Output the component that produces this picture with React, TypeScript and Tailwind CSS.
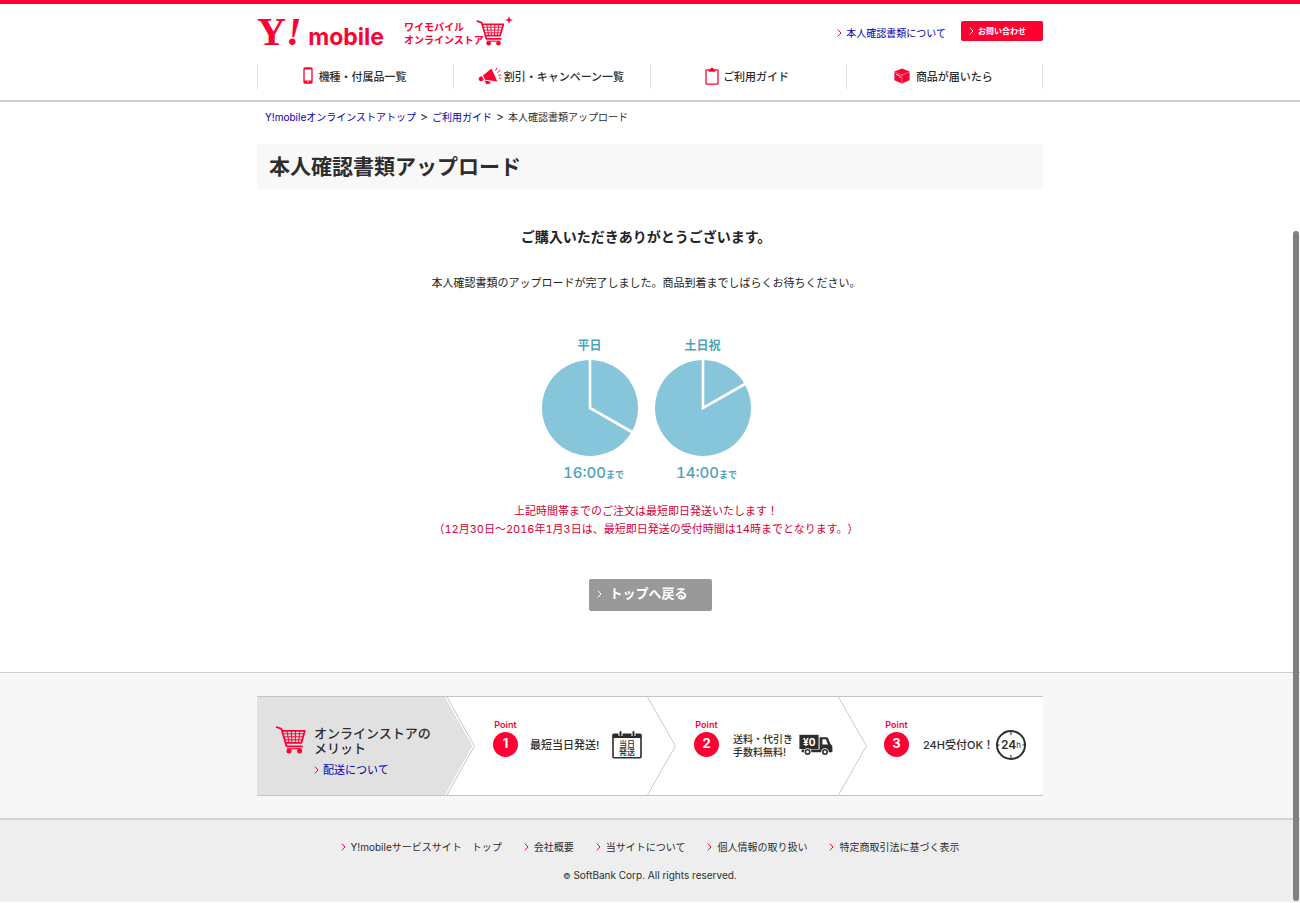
import React from "react";

type IconProps = { className?: string };

function Chevron({ className = "" }: IconProps) {
  return (
    <svg viewBox="0 0 5 8" className={`h-2 w-[5px] shrink-0 ${className}`} fill="none" stroke="currentColor" strokeWidth="1" aria-hidden="true">
      <path d="M0.8 0.6 4 4 0.8 7.4" />
    </svg>
  );
}

function Cart({ className = "" }: IconProps) {
  return (
    <svg viewBox="0 0 30 28" className={className} fill="none" stroke="#ff0033" aria-hidden="true">
      <path d="M0.8 1.2 5.4 2.8 10.6 20.4H26" strokeWidth="1.8" strokeLinecap="round" strokeLinejoin="round" />
      <path d="M6 4.8H28.8L25.4 16.8H9.6" strokeWidth="1.8" strokeLinejoin="round" />
      <path d="M7 7.8H27.8M8 10.8H27M9 13.8H26M11 4.8 13 16.8M15.2 4.8 16 16.8M19.6 4.8 19.2 16.8M24 4.8 22.4 16.8" strokeWidth="1" />
      <circle cx="13" cy="25" r="2.5" fill="#ff0033" stroke="none" />
      <circle cx="23.6" cy="25" r="2.5" fill="#ff0033" stroke="none" />
      <path d="M11 22.8H25.5" strokeWidth="1.2" />
    </svg>
  );
}

function Sparkle({ className = "" }: IconProps) {
  return (
    <svg viewBox="0 0 8 8" className={className} fill="#ff0033" aria-hidden="true">
      <path d="M4 0 5 3 8 4 5 5 4 8 3 5 0 4 3 3Z" />
    </svg>
  );
}

function PhoneIcon() {
  return (
    <svg viewBox="0 0 10 17" className="h-[17px] w-2.5" aria-hidden="true">
      <rect x="1" y="0.8" width="8" height="15.4" rx="1" fill="#fff" stroke="#ff0033" strokeWidth="1.3" />
      <path d="M1 1H9V2.4H1ZM1 13.6H9V16H1Z" fill="#ff0033" />
      <circle cx="5" cy="14.8" r="0.7" fill="#fff" />
    </svg>
  );
}

function MegaphoneIcon() {
  return (
    <svg viewBox="0 0 24 18" className="h-[18px] w-6" aria-hidden="true">
      <path d="M13.4 1.6 19.4 14.4 7 12.8 5 8.4Z" fill="#ff0033" />
      <path d="M3.9 8.9 5.8 13 3.2 14.2Q1.4 14.6 0.8 12.8 0.2 11 1.6 10Z" fill="#ff0033" />
      <path d="M6.6 13.6 12 14.4 12.4 16.6 8.4 17.2Z" fill="#ff0033" />
      <path d="M17.6 3.6 18.8 0.8M19.4 5.6 22.6 3M20.4 8.2 23.2 8.2M21 10.6 23.2 11.8" stroke="#ff0033" strokeWidth="0.9" />
    </svg>
  );
}

function ClipboardIcon() {
  return (
    <svg viewBox="0 0 14 18" className="h-[18px] w-3.5" aria-hidden="true">
      <rect x="1" y="2.8" width="12" height="14.4" rx="0.8" fill="#fff" stroke="#ff0033" strokeWidth="1.3" />
      <path d="M3.6 4.8V2.4H5.2Q5.6 0.4 7 0.4T8.8 2.4H10.4V4.8Z" fill="#ff0033" />
    </svg>
  );
}

function BoxIcon() {
  return (
    <svg viewBox="0 0 16 16" className="size-4" aria-hidden="true">
      <path d="M8 0.6 15.6 3.6V12.2L8 15.6 0.4 12.2V3.6Z" fill="#ff0033" />
      <path d="M0.6 4 8 7 15.4 4M8 7V15.4" fill="none" stroke="#fff" strokeWidth="0.4" />
      <path d="M2.2 6.4 6 8V10" fill="none" stroke="#fff" strokeWidth="0.9" />
    </svg>
  );
}

function CalendarIcon() {
  return (
    <span className="relative flex h-7 w-[30px] flex-col items-center justify-end pb-[3px] text-[8px] leading-[8px] font-medium">
      <svg viewBox="0 0 30 28" className="absolute inset-0 h-7 w-[30px]" aria-hidden="true">
        <rect x="1" y="3.4" width="28" height="23.4" rx="1" fill="#fff" stroke="#2d2d2d" strokeWidth="1.6" />
        <path d="M0.8 3.2H29.2V7H0.8Z" fill="#2d2d2d" />
        <path d="M8.5 0.6V5M21.5 0.6V5" stroke="#fff" strokeWidth="4" />
        <path d="M8.5 1V4.6M21.5 1V4.6" stroke="#2d2d2d" strokeWidth="2" strokeLinecap="round" />
      </svg>
      <span className="relative">当日</span>
      <span className="relative">発送</span>
    </span>
  );
}

function TruckIcon() {
  return (
    <span className="relative block h-[22px] w-[34px]">
      <svg viewBox="0 0 34 22" className="h-[22px] w-[34px]" aria-hidden="true">
        <path d="M0.4 0.8H19.6V15H0.4Z" fill="#2d2d2d" />
        <path d="M20.6 3.2H27.4Q28.6 3.2 29.2 4.6L31.4 10Q33.2 11 33.4 13V18.2H2.6V15.6H20.6Z" fill="#2d2d2d" />
        <path d="M23.4 5.2H26.8L29 10.4H23.4Z" fill="#fff" />
        <circle cx="8.6" cy="18" r="3.8" fill="#fff" />
        <circle cx="26" cy="18" r="3.8" fill="#fff" />
        <circle cx="8.6" cy="18" r="2.2" fill="#fff" stroke="#2d2d2d" strokeWidth="1.6" />
        <circle cx="26" cy="18" r="2.2" fill="#fff" stroke="#2d2d2d" strokeWidth="1.6" />
      </svg>
      <span className="absolute top-0.5 left-1 text-[10px] leading-[12px] font-bold text-white">¥0</span>
    </span>
  );
}

function ClockIcon() {
  return (
    <span className="relative flex size-[30px] items-center justify-center rounded-full border-2 border-[#2d2d2d] leading-none">
      <svg viewBox="0 0 26 26" className="absolute inset-0 size-[26px]" stroke="#2d2d2d" aria-hidden="true">
        <path d="M13 0V3M13 23V26M0 13H1.5M24.5 13H26" />
      </svg>
      <span className="text-[12px] font-semibold">24</span>
      <span className="text-[8px]">h</span>
    </span>
  );
}

const navItems = [
  { label: "機種・付属品一覧", icon: <PhoneIcon />, gap: "gap-1.5" },
  { label: "割引・キャンペーン一覧", icon: <MegaphoneIcon />, gap: "gap-0.5" },
  { label: "ご利用ガイド", icon: <ClipboardIcon />, gap: "gap-1" },
  { label: "商品が届いたら", icon: <BoxIcon />, gap: "gap-1.5" },
];

function Header() {
  return (
    <header className="border-t-4 border-b-2 border-t-[#ff0033] border-b-[#cfcfcf] bg-white pb-[11px]">
      <div className="mx-auto w-full max-w-[786px]">
        <div className="flex h-[60px] items-start justify-between">
          <a href="#top" className="flex items-start pt-3 text-[#ff0033]">
            <span className="-mt-1 flex w-[127px] items-baseline justify-between leading-[40px] font-bold">
              <span className="font-['Liberation_Serif',serif] text-[40px]">
                Y<i>!</i>
              </span>
              <span className="text-[23px]">mobile</span>
            </span>
            <span className="ml-5 pt-[5px] text-[10px] leading-[13px] font-bold">
              ワイモバイル
              <br />
              オンラインストア
            </span>
            <Cart className="-ml-2 mt-1 h-[26px] w-[29px]" />
            <Sparkle className="size-2" />
          </a>
          <div className="flex items-start gap-[15px] pt-[17px]">
            <a href="#documents" className="flex items-center gap-1 pt-1 text-[10px] leading-4 text-[#0000b4]">
              <Chevron className="text-[#ff0033]" />
              本人確認書類について
            </a>
            <button type="button" className="flex h-5 w-[82px] items-center gap-1 rounded-xs bg-[#ff0033] pl-2 text-[8px] font-bold text-white">
              <Chevron />
              お問い合わせ
            </button>
          </div>
        </div>
        <nav>
          <ul className="grid grid-cols-4 border-l border-[#e0e0e0]">
            {navItems.map((item) => (
              <li key={item.label} className="border-r border-[#e0e0e0]">
                <a href="#nav" className={`flex h-[25px] items-center justify-center pr-0.5 text-[11px] font-medium text-[#2d2d2d] ${item.gap}`}>
                  <span className="pb-0.5">{item.icon}</span>
                  <span className="pt-0.5">{item.label}</span>
                </a>
              </li>
            ))}
          </ul>
        </nav>
      </div>
    </header>
  );
}

function Pie({ label, hour, angleX, angleY }: { label: string; hour: string; angleX: number; angleY: number }) {
  return (
    <figure className="flex w-24 flex-col items-center text-[#4ca3b8]">
      <figcaption className="text-[12px] leading-[18px] font-bold">{label}</figcaption>
      <svg viewBox="0 0 96 96" className="mt-[5px] size-24" aria-hidden="true">
        <circle cx="48" cy="48" r="48" fill="#86c5da" />
        <path d={`M48 0V48L${angleX} ${angleY}`} fill="none" stroke="#fff" strokeWidth="2.6" />
      </svg>
      <p className="mt-[7px] pl-2 text-[15px] leading-5 font-medium tabular-nums">
        {hour}
        <span className="text-[9px] font-bold">まで</span>
      </p>
    </figure>
  );
}

function Main() {
  return (
    <main className="mx-auto w-full max-w-[786px] flex-1 pb-[61px]">
      <nav className="flex items-center gap-1 pt-1.5 pl-2 text-[10px] leading-[18px] text-[#2d2d2d]">
        <a href="#top" className="text-[#0000b4]">Y!mobileオンラインストアトップ</a>
        <span className="text-[12px]">&gt;</span>
        <a href="#guide" className="text-[#0000b4]">ご利用ガイド</a>
        <span className="text-[12px]">&gt;</span>
        <span>本人確認書類アップロード</span>
      </nav>
      <h1 className="mt-[18px] bg-[#f8f8f8] px-3 text-[21px] leading-[45px] font-bold text-[#2d2d2d]">本人確認書類アップロード</h1>
      <div className="pr-2 text-center">
        <h2 className="mt-9 text-[14px] leading-6 font-bold">ご購入いただきありがとうございます。</h2>
        <p className="mt-6 text-[11px] leading-5">本人確認書類のアップロードが完了しました。商品到着までしばらくお待ちください。</p>
        <div className="mt-11 flex justify-center gap-[17px]">
          <Pie label="平日" hour="16:00" angleX={90} angleY={72} />
          <Pie label="土日祝" hour="14:00" angleX={90} angleY={24} />
        </div>
        <p className="mt-[17px] text-[11px] leading-[18px] text-[#d7003a] tabular-nums [text-spacing-trim:space-all]">
          上記時間帯までのご注文は最短即日発送いたします！
          <br />
          （12月30日〜2016年1月3日は、最短即日発送の受付時間は14時までとなります。）
        </p>
      </div>
      <button type="button" className="mx-auto mt-[41px] flex h-8 w-[123px] items-center gap-2 rounded-xs bg-[#999] pb-0.5 pl-2 text-[13px] font-bold text-white">
        <Chevron />
        トップへ戻る
      </button>
    </main>
  );
}

function Divider() {
  return (
    <svg viewBox="0 0 29 98" className="h-[98px] w-[29px] shrink-0" fill="none" stroke="#ccc" aria-hidden="true">
      <path d="M0.5 0 28.4 49 0.5 98" />
    </svg>
  );
}

function Point({ no }: { no: number }) {
  return (
    <div className="flex flex-col items-center text-[#ff0033]">
      <span className="text-[9px] leading-[9px] font-semibold">Point</span>
      <span className="mt-[3px] flex size-[25px] items-center justify-center rounded-full bg-[#ff0033] text-[13px] font-bold text-white">{no}</span>
    </div>
  );
}

function Merits() {
  return (
    <section className="border-t border-[#ccc] bg-[#f7f7f7] pt-[23px] pb-[22px]">
      <div className="mx-auto flex w-full max-w-[786px] border-y border-[#c4c4c4] bg-white text-[#2d2d2d]">
        <div className="flex w-[188px] items-start bg-[#e1e1e1] pt-[29px] pl-[19px]">
          <Cart className="h-7 w-[30px] shrink-0" />
          <div className="ml-2 whitespace-nowrap">
            <h3 className="text-[13px] leading-[15px] font-medium">
              オンラインストアの
              <br />
              メリット
            </h3>
            <a href="#delivery" className="mt-1.5 flex items-center gap-1 text-[11px] leading-4 text-[#0000b4]">
              <Chevron className="text-[#ff0033]" />
              配送について
            </a>
          </div>
        </div>
        <svg viewBox="0 0 30 98" className="h-[98px] w-[30px] shrink-0" aria-hidden="true">
          <path d="M0 0H0.5L28 49 0.5 98H0Z" fill="#e1e1e1" />
          <path d="M2 0 29.4 49 2 98" fill="none" stroke="#c4c4c4" />
          <path d="M0.5 0 28 49 0.5 98" fill="none" stroke="#fff" />
        </svg>
        <div className="flex w-[172px] items-center pb-4 pl-[18px]">
          <Point no={1} />
          <p className="ml-3 pt-3.5 text-[11px] leading-[13px] font-medium whitespace-nowrap">最短当日発送!</p>
          <span className="ml-auto pt-3.5 pr-[5px]">
            <CalendarIcon />
          </span>
        </div>
        <Divider />
        <div className="flex w-[162px] items-center pb-4 pl-[18px]">
          <Point no={2} />
          <p className="ml-3.5 pt-4 text-[10px] leading-[13px] font-medium whitespace-nowrap">
            送料・代引き
            <br />
            手数料無料!
          </p>
          <span className="ml-auto pt-3.5 pr-[5px]">
            <TruckIcon />
          </span>
        </div>
        <Divider />
        <div className="flex min-w-0 flex-1 items-center pb-4 pl-[17px]">
          <Point no={3} />
          <p className="ml-3.5 pt-3.5 text-[11px] leading-[13px] font-medium whitespace-nowrap">24H受付OK！</p>
          <span className="ml-auto pt-3.5 pr-[17px]">
            <ClockIcon />
          </span>
        </div>
      </div>
    </section>
  );
}

const footerLinks = ["Y!mobileサービスサイト　トップ", "会社概要", "当サイトについて", "個人情報の取り扱い", "特定商取引法に基づく表示"];

function Footer() {
  return (
    <footer className="border-t-2 border-[#d2d2d2] bg-[#eee] pt-[17px] pb-4 text-[10px] text-[#2d2d2d]">
      <ul className="flex justify-center gap-[22px] leading-5">
        {footerLinks.map((label) => (
          <li key={label}>
            <a href="#footer" className="flex items-center gap-[5px]">
              <Chevron className="text-[#ff0033]" />
              {label}
            </a>
          </li>
        ))}
      </ul>
      <p className="mt-2 text-center leading-5">
        <small className="text-[8px]">©</small> SoftBank Corp. All rights reserved.
      </p>
    </footer>
  );
}

export default function App() {
  return (
    <div lang="ja" className="flex flex-col bg-white font-['Inter','Noto_Sans_CJK_JP',sans-serif] text-[#222]">
      <Header />
      <Main />
      <Merits />
      <Footer />
      <div className="fixed top-[231px] right-px bottom-0.5 w-[6px] rounded-full bg-[#808080]" aria-hidden="true" />
    </div>
  );
}
